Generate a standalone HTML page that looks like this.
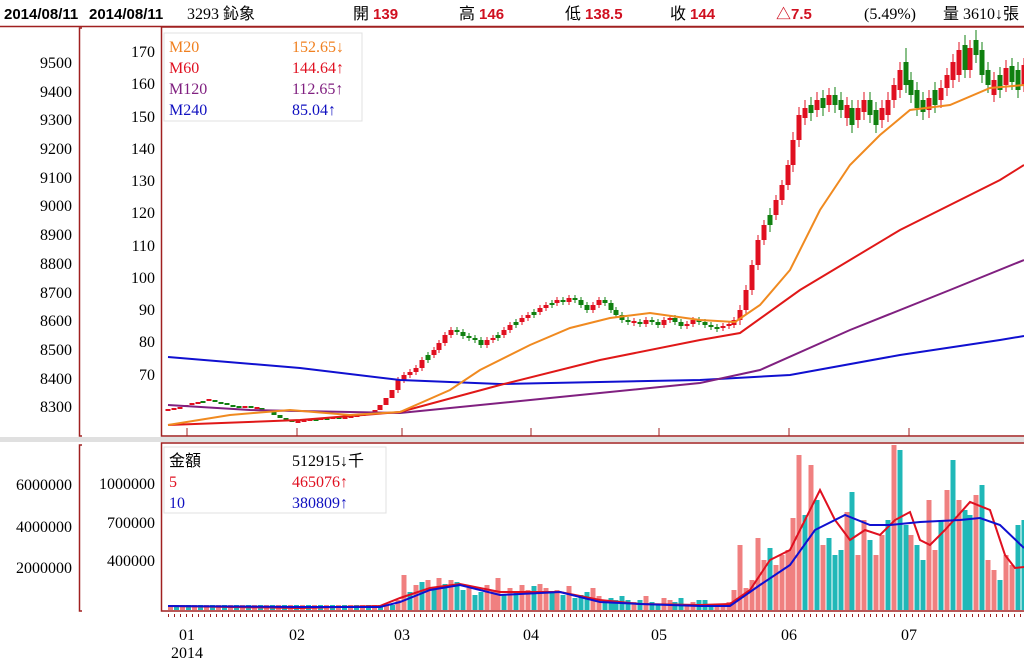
<!DOCTYPE html>
<html><head><meta charset="utf-8"><style>
body{margin:0;background:#fff;width:1024px;height:662px;overflow:hidden}
svg{position:absolute;left:0;top:0}
text{font-family:"Liberation Serif","Noto Sans CJK TC",serif;font-size:16px}
.b{font-family:"Liberation Sans","Noto Sans CJK TC",sans-serif;font-weight:bold;font-size:15px}
.ax text{text-anchor:end}
.mo text{text-anchor:middle}
</style></head><body>
<svg width="1024" height="662" xmlns="http://www.w3.org/2000/svg">
<defs>
<pattern id="pv" x="168" y="0" width="12" height="10" patternUnits="userSpaceOnUse">
<rect x="0" y="0" width="5" height="10" fill="#f08080"/><rect x="6" y="0" width="5" height="10" fill="#20b8b8"/>
</pattern>
</defs>
<rect x="0" y="437" width="1024" height="5" fill="#e0e0e0"/>
<line x1="0" y1="26.5" x2="1024" y2="26.5" stroke="#a02020" stroke-width="1.5"/>
<path d="M82 28 L79.5 28 L79.5 436 L82 436" fill="none" stroke="#a02020" stroke-width="1.5"/>
<path d="M82 445 L79.5 445 L79.5 611 L82 611" fill="none" stroke="#a02020" stroke-width="1.5"/>
<rect x="161.5" y="27" width="870" height="409" fill="none" stroke="#a02020" stroke-width="1.5"/>
<rect x="161.5" y="443" width="870" height="168" fill="none" stroke="#a02020" stroke-width="1.5"/>

<g class="ax" fill="#000">
<text x="72" y="68">9500</text><text x="72" y="97">9400</text><text x="72" y="125">9300</text><text x="72" y="154">9200</text><text x="72" y="183">9100</text><text x="72" y="211">9000</text><text x="72" y="240">8900</text><text x="72" y="269">8800</text><text x="72" y="298">8700</text><text x="72" y="326">8600</text><text x="72" y="355">8500</text><text x="72" y="384">8400</text><text x="72" y="412">8300</text>
<text x="155" y="57">170</text><text x="155" y="89">160</text><text x="155" y="122">150</text><text x="155" y="154">140</text><text x="155" y="186">130</text><text x="155" y="218">120</text><text x="155" y="251">110</text><text x="155" y="283">100</text><text x="155" y="315">90</text><text x="155" y="347">80</text><text x="155" y="380">70</text>
<text x="72" y="490">6000000</text><text x="72" y="532">4000000</text><text x="72" y="573">2000000</text>
<text x="155" y="489">1000000</text><text x="155" y="528">700000</text><text x="155" y="566">400000</text>
</g>
<g class="mo" fill="#000">
<text x="187" y="640">01</text><text x="297" y="640">02</text><text x="402" y="640">03</text><text x="531" y="640">04</text><text x="659" y="640">05</text><text x="789" y="640">06</text><text x="909" y="640">07</text><text x="187" y="658">2014</text>
</g>
<path d="M187 428V436M297 428V436M402 428V436M531 428V436M659 428V436M789 428V436M909 428V436" stroke="#a02020"/>
<line x1="168" y1="615.5" x2="1024" y2="615.5" stroke="#a02020" stroke-width="3" stroke-dasharray="1 5"/>

<!-- candles -->
<path fill="none" stroke="#e01020" stroke-width="1" d="M398 377V393M404 372V383M410 369V378M416 365V375M422 357V371M434 347V358M439 340V353M445 332V346M451 327V338M487 337V348M493 335V343M504 327V338M510 322V333M522 315V325M528 312V321M540 305V315M546 302V311M557 297V306M569 295V305M593 302V313M599 297V308M634 318V326M646 317V327M664 317V328M670 315V323M687 321V329M693 317V327M723 323V331M729 321V329M734 317V328M740 305V325M746 285V315M752 260V295M758 235V270M764 220V245M776 195V220M782 180V205M788 160V190M793 132V172M799 107V147M805 100V125M817 92V117M829 88V112M847 97V126M858 100V128M864 92V120M882 100V128M888 92V122M894 78V108M900 62V98M929 90V118M941 80V108M947 68V96M953 54V88M959 42V82M970 40V78M994 72V102M1006 60V92M1024 58V92"/>
<path fill="none" stroke="#108010" stroke-width="1" d="M428 352V363M457 327V335M463 329V339M469 333V341M475 335V343M481 337V348M498 332V341M516 319V328M534 309V318M552 300V308M563 297V305M575 295V303M581 297V308M587 302V313M605 297V306M611 300V313M616 307V318M622 312V323M628 317V325M640 319V327M652 317V325M658 319V328M675 315V325M681 319V329M699 317V325M705 319V328M711 322V330M717 324V332M770 208V232M811 97V121M823 90V116M835 87V113M841 92V118M852 100V133M870 92V123M876 102V133M906 48V93M911 72V103M917 82V116M923 92V120M935 82V113M965 35V78M976 30V63M982 42V83M988 62V93M1000 67V98M1012 58V90M1018 62V98"/>
<path fill="none" stroke="#e01020" stroke-width="5" d="M168 411V409M174 410V408M180 409V407M186 407V405M192 405V403M198 404V402M209 401V399M245 408V406M257 409V407M298 423V421M304 422V420M310 421V419M321 420V418M333 419V417M345 419V417M351 418V416M357 417V415M363 416V414M369 414V412M375 412V410M380 410V405M386 405V398M392 398V390M398 390V380M404 380V375M410 375V372M416 372V368M422 368V360M434 355V350M439 350V343M445 343V335M451 335V330M487 345V340M493 340V338M504 335V330M510 330V325M522 322V318M528 318V315M540 312V308M546 308V305M557 303V300M569 302V298M593 310V305M599 305V300M634 323V321M646 324V320M664 325V320M670 320V318M687 326V324M693 324V320M723 328V326M729 326V324M734 325V320M740 320V310M746 310V290M752 290V265M758 265V240M764 240V225M776 215V200M782 200V185M788 185V165M793 165V140M799 140V115M805 118V108M817 110V100M829 105V95M847 118V105M858 120V108M864 112V100M882 120V108M888 115V100M894 100V85M900 90V70M929 110V98M941 100V88M947 88V75M953 80V62M959 75V50M970 70V48M994 95V80M1006 85V68M1024 85V65"/>
<path fill="none" stroke="#108010" stroke-width="5" d="M203 401V403M215 400V402M221 402V404M227 403V405M233 405V407M239 406V408M251 406V408M262 408V410M268 410V412M274 412V415M280 415V418M286 418V420M292 420V422M316 419V421M327 418V420M339 417V419M428 355V360M457 330V332M463 332V336M469 336V338M475 338V340M481 340V345M498 335V338M516 322V325M534 312V315M552 303V305M563 300V302M575 298V300M581 300V305M587 305V310M605 300V303M611 303V310M616 310V315M622 315V320M628 320V322M640 322V324M652 320V322M658 322V325M675 318V322M681 322V326M699 320V322M705 322V325M711 325V327M717 327V329M770 215V225M811 105V113M823 98V108M835 95V105M841 100V110M852 108V125M870 100V115M876 110V125M906 62V85M911 80V95M917 90V108M923 100V112M935 90V105M965 45V70M976 40V55M982 50V75M988 70V85M1000 75V90M1012 66V82M1018 70V90"/>

<!-- MAs -->
<polyline fill="none" stroke="#1010d0" stroke-width="2" points="168,357 300,368 400,380 500,384 600,382 700,380 790,375 900,355 1000,340 1024,336"/>
<polyline fill="none" stroke="#802080" stroke-width="2" points="168,405 250,410 400,413 550,398 700,383 760,370 850,330 950,290 1024,260"/>
<polyline fill="none" stroke="#e01818" stroke-width="2" points="168,425 300,420 400,412 500,385 600,360 700,340 740,333 800,290 900,230 1000,180 1024,165"/>
<polyline fill="none" stroke="#f08a20" stroke-width="2" points="168,425 230,415 290,410 350,415 400,412 450,390 480,370 530,345 570,328 610,318 650,313 700,320 735,322 760,305 790,270 820,210 850,165 880,135 910,110 950,105 990,88 1024,85"/>

<!-- volume -->
<rect x="168" y="605" width="228" height="5" fill="url(#pv)"/>
<path fill="none" stroke="#f08080" stroke-width="5" d="M398 610V600M404 610V575M416 610V585M428 610V580M439 610V578M451 610V580M469 610V588M487 610V585M493 610V590M498 610V578M510 610V588M522 610V585M528 610V590M540 610V584M546 610V588M557 610V590M569 610V586M593 610V588M599 610V596M634 610V602M646 610V596M664 610V598M670 610V600M687 610V604M693 610V602M717 610V606M723 610V605M729 610V602M734 610V590M740 610V545M746 610V588M752 610V580M758 610V538M764 610V560M776 610V565M782 610V555M788 610V550M793 610V518M799 610V455M811 610V465M823 610V545M847 610V512M858 610V555M864 610V520M876 610V555M882 610V535M894 610V445M911 610V535M929 610V500M935 610V550M947 610V490M959 610V500M976 610V495M988 610V560M994 610V570M1006 610V555M1012 610V565"/>
<path fill="none" stroke="#20b8b8" stroke-width="5" d="M410 610V592M422 610V582M434 610V588M445 610V584M457 610V582M463 610V590M475 610V595M481 610V592M504 610V595M516 610V592M534 610V586M552 610V592M563 610V595M575 610V598M581 610V595M587 610V592M605 610V600M611 610V598M616 610V600M622 610V596M628 610V600M640 610V600M652 610V602M658 610V604M675 610V602M681 610V598M699 610V600M705 610V600M711 610V606M770 610V548M805 610V515M817 610V500M829 610V538M835 610V555M841 610V550M852 610V492M870 610V540M888 610V520M900 610V450M906 610V525M917 610V545M923 610V560M941 610V520M953 610V460M965 610V510M970 610V515M982 610V485M1000 610V580M1018 610V525M1024 610V520"/>
<polyline fill="none" stroke="#e01020" stroke-width="2" points="168,606 300,608 380,606 400,598 430,588 460,584 500,592 560,592 600,600 640,604 700,605 730,604 750,590 770,560 790,550 805,520 820,490 835,520 850,540 865,530 880,535 895,520 910,512 920,540 930,545 945,530 970,502 990,510 1005,555 1015,568 1024,567"/>
<polyline fill="none" stroke="#1010d0" stroke-width="2" points="168,606 300,607 380,607 400,602 430,590 460,585 500,595 560,592 600,602 640,604 700,606 730,606 760,585 790,565 815,530 845,515 870,525 890,525 920,522 960,520 980,518 1000,525 1024,548"/>

<!-- header -->
<text x="4" y="19" class="b" fill="#000">2014/08/11</text>
<text x="89" y="19" class="b" fill="#000">2014/08/11</text>
<text x="187" y="19" fill="#000">3293 鈊象</text>
<text x="353" y="19" fill="#000">開 <tspan class="b" fill="#d01020">139</tspan></text>
<text x="459" y="19" fill="#000">高 <tspan class="b" fill="#d01020">146</tspan></text>
<text x="565" y="19" fill="#000">低 <tspan class="b" fill="#d01020">138.5</tspan></text>
<text x="670" y="19" fill="#000">收 <tspan class="b" fill="#d01020">144</tspan></text>
<text x="776" y="19" class="b" fill="#d01020">△7.5</text>
<text x="864" y="19" fill="#000">(5.49%)</text>
<text x="943" y="19" fill="#000">量 3610↓張</text>

<rect x="164" y="33" width="198" height="88" fill="#fff" stroke="#e0e0e0"/>
<text x="169" y="52" fill="#f08020">M20</text><text x="292" y="52" fill="#f08020">152.65↓</text>
<text x="169" y="73" fill="#e01020">M60</text><text x="292" y="73" fill="#e01020">144.64↑</text>
<text x="169" y="94" fill="#802080">M120</text><text x="292" y="94" fill="#802080">112.65↑</text>
<text x="169" y="115" fill="#1010c0">M240</text><text x="292" y="115" fill="#1010c0">85.04↑</text>
<rect x="164" y="447" width="222" height="66" fill="#fff" stroke="#e0e0e0"/>
<text x="169" y="466" fill="#000">金額</text><text x="292" y="466" fill="#000">512915↓千</text>
<text x="169" y="487" fill="#e01020">5</text><text x="292" y="487" fill="#e01020">465076↑</text>
<text x="169" y="508" fill="#1010c0">10</text><text x="292" y="508" fill="#1010c0">380809↑</text>
</svg>
</body></html>
